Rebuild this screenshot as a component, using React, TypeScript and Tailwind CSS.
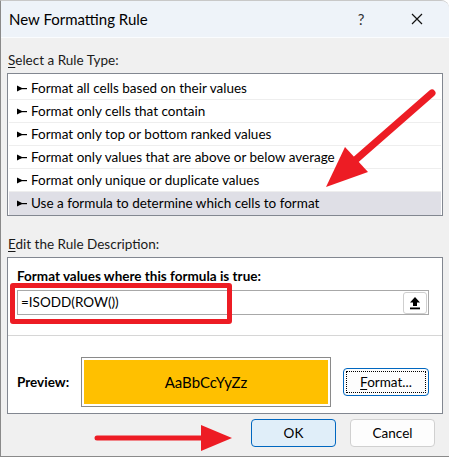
import React from 'react'

const RULES = [
  'Format all cells based on their values',
  'Format only cells that contain',
  'Format only top or bottom ranked values',
  'Format only values that are above or below average',
  'Format only unique or duplicate values',
  'Use a formula to determine which cells to format',
]

function Pointer() {
  return (
    <svg width="10" height="7" viewBox="0 0 10 7" className="shrink-0">
      <polygon points="0,0.5 6,3.5 0,6.5" fill="#000" />
      <rect x="0" y="3" width="10" height="1.2" fill="#000" />
    </svg>
  )
}

export default function App() {
  return (
    <div
      className="relative w-[450px] h-[458px] bg-white"
      style={{ fontFamily: '"Segoe UI", Lato, "Noto Sans", sans-serif' }}
    >
      <div className="flex flex-col w-[449px] h-[457px] border-l border-b border-t border-[#8a8a8a] border-t-[#c8c8c8] rounded-tr-[8px] overflow-hidden bg-[#f0f0f0] text-[13.5px] text-[#1a1a1a]">
        {/* title bar */}
        <div className="flex items-center h-[37px] bg-[#eef3f9] border-b border-[#fafcfe] pl-[8px] shrink-0">
          <span className="text-[15px] text-black flex-1">New Formatting Rule</span>
          <span className="w-[20px] text-center text-[15px] text-[#333] mr-[40px]">?</span>
          <svg width="12" height="12" viewBox="0 0 12 12" className="mr-[26px]">
            <path d="M1 1L11 11M11 1L1 11" stroke="#111" strokeWidth="1.2" />
          </svg>
        </div>

        <div className="flex flex-col px-[6px] flex-1">
          <div className="h-[35px] flex items-end pb-[3px] pl-[1px]">
            <span>
              <span className="underline underline-offset-2">S</span>elect a Rule Type:
            </span>
          </div>

          <div className="border border-[#828790] bg-white pt-[3px] px-[1px]">
            {RULES.map((r, i) => (
              <div
                key={r}
                className={`flex items-center gap-[4px] h-[23px] pl-[8px] border-b ${
                  i === 5 ? 'bg-[#dfdfe6] border-[#dfdfe6]' : 'border-[#eeeeee]'
                }`}
              >
                <Pointer />
                <span className="text-black">{r}</span>
              </div>
            ))}
          </div>

          <div className="h-[41px] flex items-end pb-[3px] pl-[1px]">
            <span>
              <span className="underline underline-offset-2">E</span>dit the Rule Description:
            </span>
          </div>

          <div className="flex flex-col border border-[#828790] bg-white h-[157px]">
            <div className="pl-[9px] pt-[8px] font-bold text-black h-[32px]">
              F<span className="underline underline-offset-2">o</span>rmat values where this formula is true:
            </div>
            <div className="flex items-center ml-[9px] w-[412px] h-[25px] border border-[#a8a8a8] bg-white">
              <span className="pl-[3px] flex-1 text-black">=ISODD(ROW())</span>
              <div className="flex items-center justify-center w-[24px] h-[22px] mr-[1px] rounded-[3px] border border-[#cfcfcf] bg-white">
                <svg width="12" height="14" viewBox="0 0 12 14">
                  <path d="M6 1L1 6.5H4V10H8V6.5H11Z" fill="#000" />
                  <rect x="1" y="11.5" width="10" height="1.8" fill="#000" />
                </svg>
              </div>
            </div>
            <div className="mt-[20px] border-t border-[#d6d6d6]" />
            <div className="flex items-center mt-[21px] pl-[9px]">
              <span className="font-bold text-black w-[64px]">Preview:</span>
              <div className="w-[250px] h-[50px] border border-[#8a8a8a] p-[2px] bg-white">
                <div className="w-full h-full bg-[#ffc000] flex items-center justify-center text-[15px] text-black">
                  AaBbCcYyZz
                </div>
              </div>
              <div className="ml-[12px] w-[86px] h-[28px] rounded-[4px] border border-[#0067c0] bg-[#fdfdfd] p-[2px]">
                <div className="w-full h-full border border-dotted border-black flex items-center justify-center text-black">
                  <span>
                    <span className="underline underline-offset-2">F</span>ormat...
                  </span>
                </div>
              </div>
            </div>
          </div>

          <div className="flex justify-end gap-[14px] mt-[5px] pr-[8px]">
            <div className="w-[85px] h-[28px] rounded-[4px] border border-[#0067c0] bg-[#e0eef9] flex items-center justify-center text-black">
              OK
            </div>
            <div className="w-[85px] h-[28px] rounded-[4px] border border-[#d0d0d0] bg-[#fdfdfd] flex items-center justify-center text-black">
              Cancel
            </div>
          </div>
        </div>
      </div>

      {/* annotation overlays */}
      <div className="absolute left-[10px] top-[283px] w-[222px] h-[41px] border-[5px] border-[#ed1c24] rounded-[3px]" />
      <svg className="absolute left-0 top-0" width="450" height="458" viewBox="0 0 450 458">
        <line x1="432" y1="93" x2="352" y2="163" stroke="#ed1c24" strokeWidth="7" strokeLinecap="round" />
        <polygon points="326,187 345,147 368,172" fill="#ed1c24" />
        <line x1="97" y1="438" x2="205" y2="438" stroke="#ed1c24" strokeWidth="5" strokeLinecap="round" />
        <polygon points="201,425 232,438 201,451" fill="#ed1c24" />
      </svg>
    </div>
  )
}
